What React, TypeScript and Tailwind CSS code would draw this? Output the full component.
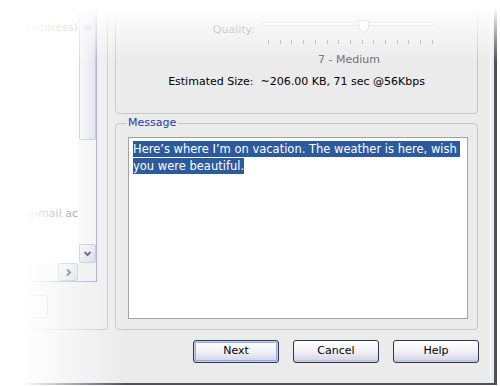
import React from 'react';

const ticks = Array.from({ length: 15 });

function Chevron({ dir }: { dir: 'down' | 'right' }) {
  return (
    <svg width="9" height="9" viewBox="0 0 9 9">
      {dir === 'down' ? (
        <path d="M1.5 3 L4.5 6 L7.5 3" stroke="#1c2545" strokeWidth="2" fill="none" />
      ) : (
        <path d="M3 1.5 L6 4.5 L3 7.5" stroke="#1c2545" strokeWidth="2" fill="none" />
      )}
    </svg>
  );
}

function XpButton({ label, isDefault }: { label: string; isDefault?: boolean }) {
  return (
    <button
      className={
        isDefault
          ? 'w-[86px] h-[23px] rounded-[3px] border border-[#2c3858] bg-linear-to-b from-white via-[#f2f2f7] to-[#d0d0e3] text-[11px] text-black shadow-[inset_0_0_0_1px_#c3d0f0,inset_0_0_0_2px_#95aae0]'
          : 'w-[86px] h-[23px] rounded-[3px] border border-[#2c3858] bg-linear-to-b from-white via-[#f2f2f7] to-[#d0d0e3] text-[11px] text-black shadow-[inset_0_-2px_0_#c6c6da]'
      }
    >
      {label}
    </button>
  );
}

export default function App() {
  return (
    <div className="relative w-[500px] h-[386px] overflow-hidden bg-white font-['DejaVu_Sans'] text-[11px] text-black">
      <div className="w-[497px] h-[385px] border-r-[3px] border-b-2 border-[#4f525c] bg-[#ebebeb]">
        <div className="h-full w-[491px] border-r border-[#f8f8f8] flex flex-col">
          <div className="flex h-[330px]">
            {/* left group box (recipients) */}
            <div className="w-[108px] h-full border-r border-b border-[#c4c4c4] rounded-br-[4px] flex flex-col">
              <div className="w-[97px] h-[282px] border-r border-b border-[#8d9cb8] bg-white flex flex-col">
                <div className="flex flex-1 min-h-0">
                  <div className="flex-1 whitespace-nowrap text-[#555] flex flex-col items-end pr-[1px]">
                    <div className="mt-[21px] leading-[14px]">(address)</div>
                    <div className="mt-[172px] leading-[14px]">e-mail ac</div>
                  </div>
                  <div className="w-[17px] flex flex-col bg-[#f3f3f1]">
                    <div className="h-[140px] rounded-b-[2px] border border-t-0 border-[#b4b4cc] bg-linear-to-r from-[#f2f2f8] to-[#d9d9e8] flex flex-col items-center pt-[25px] gap-[1px]">
                      <div className="w-[7px] h-px bg-[#9a9ab4]" />
                      <div className="w-[7px] h-px bg-[#9a9ab4]" />
                      <div className="w-[7px] h-px bg-[#9a9ab4]" />
                    </div>
                    <div className="flex-1" />
                    <div className="h-[19px] rounded-[2px] border border-[#b4b4cc] bg-linear-to-br from-[#f2f2f8] to-[#cfcfe2] flex items-center justify-center">
                      <Chevron dir="down" />
                    </div>
                  </div>
                </div>
                <div className="h-[18px] flex bg-[#f3f3f1]">
                  <div className="flex-1" />
                  <div className="w-[20px] rounded-[2px] border border-[#b4b4cc] bg-linear-to-br from-[#f2f2f8] to-[#cfcfe2] flex items-center justify-center">
                    <Chevron dir="right" />
                  </div>
                  <div className="w-[18px] bg-[#ebebeb]" />
                </div>
              </div>
              <div className="mt-[13px] w-[48px] h-[23px] border border-[#b8b8b8] rounded-r-[3px] bg-[#f2f2f2]" />
            </div>

            <div className="ml-[7px] w-[363px] flex flex-col">
              {/* quality group box */}
              <div className="-mt-[10px] h-[124px] border border-[#c4c4c4] rounded-[4px] flex flex-col pt-[29px]">
                <div className="flex">
                  <div className="w-[139px] text-right text-[#8c8c8c] leading-[14px] mt-[3px]">Quality:</div>
                  <div className="ml-[8px] w-[172px] flex flex-col">
                    <div className="relative h-[16px]">
                      <div className="mt-[2px] h-[4px] border border-[#c2c2c2] rounded-[2px] bg-[#fbfbfb]" />
                      <svg className="absolute left-[95px] top-0" width="11" height="14" viewBox="0 0 11 14">
                        <path d="M0.5 0.5 H10.5 V8 L5.5 13 L0.5 8 Z" fill="#f9f9f9" stroke="#b8b8b8" />
                      </svg>
                    </div>
                    <div className="mt-[4px] flex justify-between pl-[5px] pr-[2px]">
                      {ticks.map((_, i) => (
                        <div key={i} className="w-px h-[4px] bg-[#9c9c9c]" />
                      ))}
                    </div>
                    <div className="mt-[9px] text-center leading-[14px] text-[#6b6b6b]">7 - Medium</div>
                  </div>
                </div>
                <div className="mt-[8px] text-center leading-[14px]">
                  Estimated Size:&nbsp;&nbsp;~206.00 KB, 71 sec @56Kbps
                </div>
              </div>

              {/* message group box */}
              <fieldset className="mt-[3px] h-[213px] border border-[#c4c4c4] rounded-[4px]">
                <legend className="ml-[10px] px-[2px] leading-[12px] text-[#2440a0]">Message</legend>
                <div className="mt-[8px] ml-[12px] w-[340px] h-[182px] border border-[#a3a3a3] bg-white pl-[4px] pt-[3px] whitespace-pre text-[11.5px]">
                  <div>
                    <span className="inline-block h-[16px] leading-[16px] bg-[#2c5a9e] text-white">Here’s where I’m on vacation. The weather is here, wish </span>
                  </div>
                  <div>
                    <span className="inline-block h-[16px] leading-[16px] bg-[#2c5a9e] text-white">you were beautiful.</span>
                  </div>
                </div>
              </fieldset>
            </div>
          </div>

          <div className="mt-[10px] flex justify-end gap-[14px] pr-[11px]">
            <XpButton label="Next" isDefault />
            <XpButton label="Cancel" />
            <XpButton label="Help" />
          </div>
        </div>
      </div>

      {/* book-style white fades over the left and top edges */}
      <div className="pointer-events-none absolute inset-y-0 left-0 w-[125px] bg-linear-to-r from-white from-[18%] via-white/55 via-[55%] to-transparent" />
      <div className="pointer-events-none absolute inset-x-0 top-0 h-[62px] bg-linear-to-b from-white from-[12%] via-white/60 via-[45%] to-transparent" />
    </div>
  );
}
